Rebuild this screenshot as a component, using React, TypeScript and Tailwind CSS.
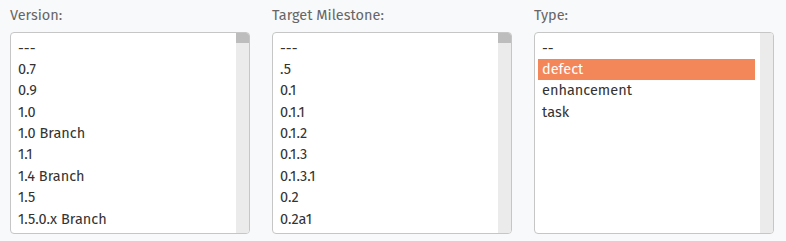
const fields = [
  {
    label: "Version:",
    thumb: true,
    options: ["---", "0.7", "0.9", "1.0", "1.0 Branch", "1.1", "1.4 Branch", "1.5", "1.5.0.x Branch"],
    selected: -1,
  },
  {
    label: "Target Milestone:",
    thumb: true,
    options: ["---", ".5", "0.1", "0.1.1", "0.1.2", "0.1.3", "0.1.3.1", "0.2", "0.2a1"],
    selected: -1,
  },
  {
    label: "Type:",
    thumb: false,
    options: ["--", "defect", "enhancement", "task"],
    selected: 1,
  },
]

export default function App() {
  return (
    <div
      className="flex h-[241px] w-[786px] gap-[22px] bg-[#f8f9fb] px-[10px] pt-[5px]"
      style={{ fontFamily: '"Fira Sans", "Open Sans", "Noto Sans", sans-serif' }}
    >
      {fields.map((field) => (
        <div key={field.label} className="flex w-[240px] flex-col">
          <label className="mb-[7px] text-[14.5px] leading-[20px] text-[#666666]">{field.label}</label>
          <div className="flex h-[202px] overflow-hidden rounded-[4px] border border-[#c6c6c6] bg-white">
            <ul className="flex-1 pt-[4.5px] pl-[3px] pr-[5px]">
              {field.options.map((opt, i) => (
                <li
                  key={opt}
                  className={
                    i === field.selected
                      ? "h-[21.4px] bg-[#f3875a] px-[4px] text-[14.5px] leading-[21px] text-white"
                      : "h-[21.4px] px-[4px] text-[14.5px] leading-[21px] text-[#333333]"
                  }
                >
                  {opt}
                </li>
              ))}
            </ul>
            <div className="w-[13px] bg-[#ebebeb]">
              {field.thumb && <div className="h-[10px] bg-[#bdbdbd]" />}
            </div>
          </div>
        </div>
      ))}
    </div>
  )
}
